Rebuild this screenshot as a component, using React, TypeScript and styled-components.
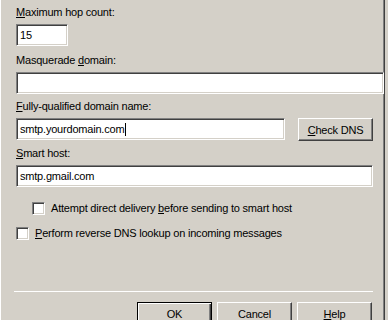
import styled, { createGlobalStyle } from "styled-components";

const GlobalStyle = createGlobalStyle`
  html, body {
    margin: 0;
    padding: 0;
    background: #d4d0c8;
  }
  body {
    font-family: "Liberation Sans", Arial, sans-serif;
    font-size: 11px;
    letter-spacing: -0.2px;
    color: #000;
  }
`;

const Window = styled.div`
  width: 388px;
  height: 320px;
  overflow: hidden;
  background: #d4d0c8;
`;

const TabPage = styled.div`
  width: 384px;
  height: 320px;
  box-sizing: border-box;
  border-left: 1px solid #ffffff;
  border-right: 1px solid #808080;
  box-shadow: 1px 0 0 #404040;
  padding: 6px 0 0 15px;
  display: flex;
  flex-direction: column;
`;

const Label = styled.div`
  line-height: 13px;
  height: 13px;
  white-space: nowrap;
  margin-bottom: 5px;
`;

const Key = styled.span`
  text-decoration: underline;
  text-underline-offset: 1px;
`;

const Field = styled.div<{ $width: number; $gap?: number }>`
  width: ${(p) => p.$width}px;
  height: 22px;
  box-sizing: border-box;
  background: #fff;
  border-top: 1px solid #808080;
  border-left: 1px solid #808080;
  border-right: 1px solid #ffffff;
  border-bottom: 1px solid #ffffff;
  box-shadow: inset 1px 1px 0 #404040, inset -1px -1px 0 #d4d0c8;
  padding: 0 0 0 3px;
  display: flex;
  align-items: center;
  white-space: nowrap;
  flex: none;
  margin-bottom: ${(p) => p.$gap ?? 8}px;
`;

const Caret = styled.span`
  display: inline-block;
  width: 1px;
  height: 13px;
  background: #000;
  margin-left: 1px;
`;

const FieldRow = styled.div`
  display: flex;
  align-items: flex-start;
  gap: 13px;
  margin-bottom: 6px;
`;

const Button = styled.div<{ $default?: boolean }>`
  width: 75px;
  height: 23px;
  box-sizing: border-box;
  background: #d4d0c8;
  display: flex;
  align-items: center;
  justify-content: center;
  flex: none;
  border-top: 1px solid #ffffff;
  border-left: 1px solid #ffffff;
  border-right: 1px solid #404040;
  border-bottom: 1px solid #404040;
  box-shadow: inset -1px -1px 0 #808080;
  ${(p) =>
    p.$default &&
    `
    border: 1px solid #000;
    box-shadow: inset 1px 1px 0 #ffffff, inset -1px -1px 0 #404040, inset -2px -2px 0 #808080;
  `}
`;

const CheckRow = styled.label<{ $indent: number; $gap: number }>`
  display: flex;
  align-items: center;
  gap: 6px;
  padding-left: ${(p) => p.$indent}px;
  margin-bottom: ${(p) => p.$gap}px;
  height: 13px;
  line-height: 13px;
  white-space: nowrap;
`;

const Box = styled.span`
  width: 13px;
  height: 13px;
  box-sizing: border-box;
  background: #fff;
  border-top: 1px solid #808080;
  border-left: 1px solid #808080;
  border-right: 1px solid #ffffff;
  border-bottom: 1px solid #ffffff;
  box-shadow: inset 1px 1px 0 #404040, inset -1px -1px 0 #d4d0c8;
  flex: none;
`;

const Separator = styled.div`
  width: 359px;
  margin-left: -2px;
  height: 1px;
  background: #808080;
  border-bottom: 1px solid #ffffff;
  margin-top: 51px;
`;

const ButtonBar = styled.div`
  display: flex;
  gap: 5px;
  margin-top: 10px;
  padding-left: 121px;
`;

const App = () => {
  return (
    <Window>
      <GlobalStyle />
      <TabPage>
        <Label>
          <Key>M</Key>aximum hop count:
        </Label>
        <Field $width={52} $gap={8}>15</Field>

        <Label>
          Masquerade <Key>d</Key>omain:
        </Label>
        <Field $width={368} $gap={6}></Field>

        <Label>
          <Key>F</Key>ully-qualified domain name:
        </Label>
        <FieldRow>
          <Field $width={269} $gap={0}>
            smtp.yourdomain.com
            <Caret />
          </Field>
          <Button>
            <span>
              <Key>C</Key>heck DNS
            </span>
          </Button>
        </FieldRow>

        <Label>
          <Key>S</Key>mart host:
        </Label>
        <Field $width={357} $gap={15}>smtp.gmail.com</Field>

        <CheckRow $indent={16} $gap={12}>
          <Box />
          <span>
            Attempt direct delivery <Key>b</Key>efore sending to smart host
          </span>
        </CheckRow>
        <CheckRow $indent={0} $gap={0}>
          <Box />
          <span>
            <Key>P</Key>erform reverse DNS lookup on incoming messages
          </span>
        </CheckRow>

        <Separator />

        <ButtonBar>
          <Button $default>OK</Button>
          <Button>Cancel</Button>
          <Button>
            <span>
              <Key>H</Key>elp
            </span>
          </Button>
        </ButtonBar>
      </TabPage>
    </Window>
  );
};

export default App;
